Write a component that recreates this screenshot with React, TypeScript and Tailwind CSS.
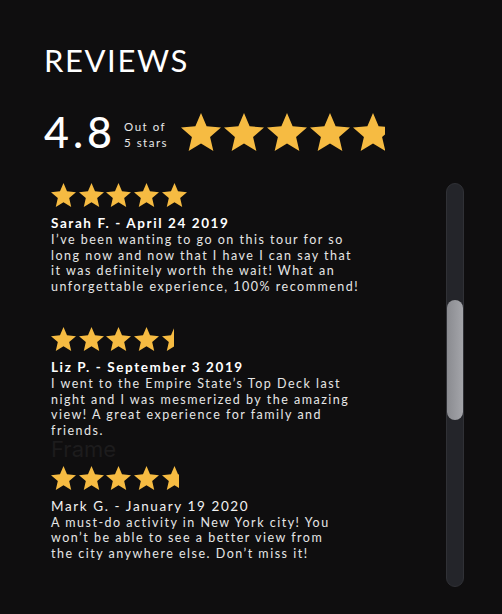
import React from "react";

const STAR = "12 17.27 18.18 21 16.54 13.97 22 9.24 14.81 8.63 12 2 9.19 8.63 2 9.24 7.46 13.97 5.82 21";

function Star({ w, h, fill = 1 }: { w: number; h: number; fill?: number }) {
  return (
    <div className="overflow-hidden shrink-0" style={{ width: w * fill, height: h }}>
      <svg width={w} height={h} viewBox="2 2 20 19" preserveAspectRatio="none">
        <polygon points={STAR} fill="#f6bb42" />
      </svg>
    </div>
  );
}

function Stars({ w, h, gap, rating }: { w: number; h: number; gap: number; rating: number }) {
  const items = [];
  for (let i = 0; i < 5; i++) {
    const f = Math.max(0, Math.min(1, rating - i));
    if (f > 0) items.push(<Star key={i} w={w} h={h} fill={f} />);
  }
  return (
    <div className="flex" style={{ gap }}>
      {items}
    </div>
  );
}

function Review({
  rating,
  name,
  bold,
  lines,
}: {
  rating: number;
  name: string;
  bold: boolean;
  lines: string[];
}) {
  return (
    <div>
      <Stars w={25} h={24} gap={2.7} rating={rating} />
      <div
        className={
          "mt-[7px] text-[13.5px] leading-[18px] tracking-[1.6px] " +
          (bold ? "font-bold text-white" : "font-normal text-[#f2f2f2]")
        }
      >
        {name}
      </div>
      <p className="text-[12.5px] leading-[15.7px] tracking-[1.5px] text-[#e6e6e6] w-[330px]">
        {lines.map((l, i) => (
          <span key={i} className="block whitespace-nowrap">
            {l}
          </span>
        ))}
      </p>
    </div>
  );
}

export default function App() {
  return (
    <div className="w-[502px] h-[614px] bg-[#0f0e0f] overflow-hidden font-['Lato',sans-serif] text-white">
      <div className="pl-[44px] pt-[42px]">
        <h1 className="text-[31px] leading-[36px] tracking-[1.6px] font-normal">REVIEWS</h1>
        <div className="flex items-center mt-[32px]">
          <div className="text-[43px] leading-[44px] tracking-[4px] font-medium">4.8</div>
          <div className="ml-[8px] mt-[6px] text-[11.5px] leading-[16px] tracking-[1.5px] text-[#e8e8e8]">
            <div>Out of</div>
            <div>5 stars</div>
          </div>
          <div className="ml-[13px]">
            <Stars w={40} h={38} gap={3} rating={4.8} />
          </div>
        </div>
      </div>
      <div className="flex mt-[29px]">
        <div className="pl-[51px] w-[400px]">
          <Review
            rating={5}
            name="Sarah F. - April 24 2019"
            bold
            lines={[
              "I’ve been wanting to go on this tour for so",
              "long now and now that I have I can say that",
              "it was definitely worth the wait! What an",
              "unforgettable experience, 100% recommend!",
            ]}
          />
          <div className="mt-[32px]">
            <Review
              rating={4.48}
              name="Liz P. - September 3 2019"
              bold
              lines={[
                "I went to the Empire State’s Top Deck last",
                "night and I was mesmerized by the amazing",
                "view! A great experience for family and",
                "friends.",
              ]}
            />
          </div>
          <div className="font-['Inter',sans-serif] text-[22px] leading-[17px] text-[#1d1c1d] mt-[2px] mb-[8px]">
            Frame
          </div>
          <Review
            rating={4.68}
            name="Mark G. - January 19 2020"
            bold={false}
            lines={[
              "A must-do activity in New York city! You",
              "won’t be able to see a better view from",
              "the city anywhere else. Don’t miss it!",
            ]}
          />
        </div>
        <div className="ml-auto mr-[38px] w-[18px] h-[404px] rounded-full bg-[#24252a] border border-[#303136] flex flex-col shrink-0">
          <div className="h-[116px] shrink-0" />
          <div className="h-[120px] rounded-full bg-gradient-to-r from-[#8a8b90] to-[#a4a5aa]" />
        </div>
      </div>
    </div>
  );
}
